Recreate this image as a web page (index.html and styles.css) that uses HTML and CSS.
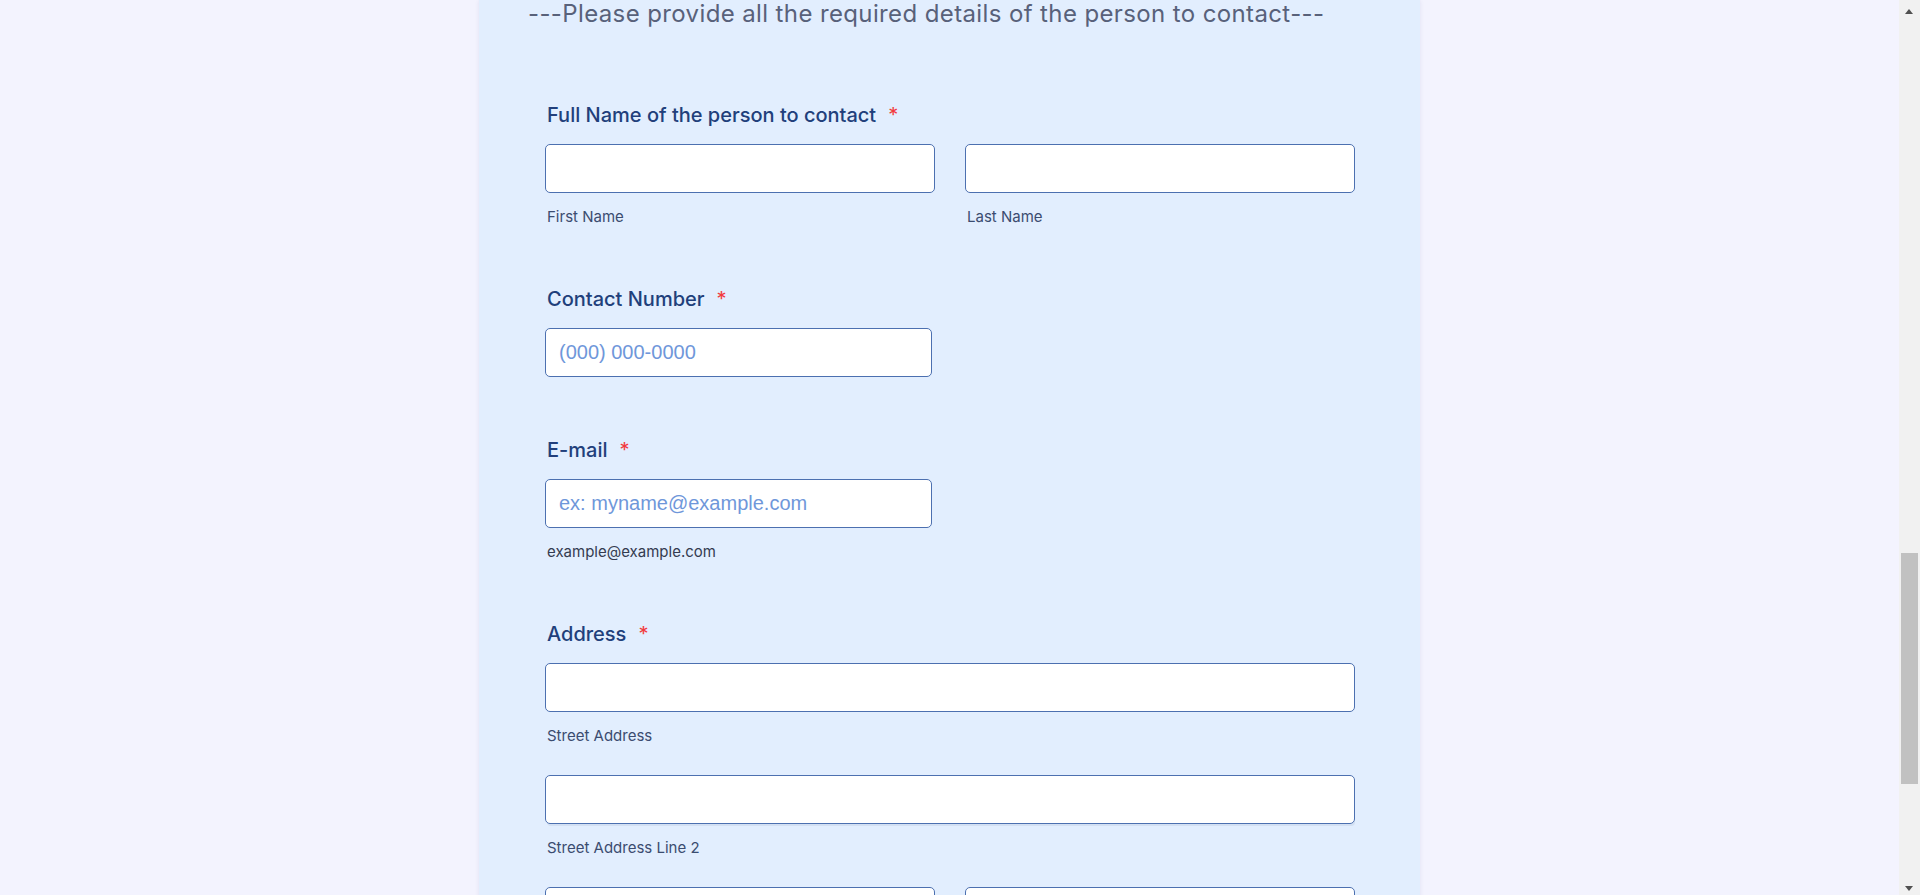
FILE: index.html
```html
<!DOCTYPE html>
<html lang="en">
<head>
<meta charset="utf-8">
<title>Contact details</title>
<link rel="stylesheet" href="styles.css">
</head>
<body>
<div class="page">
  <form class="panel">
    <h2 class="subheader">---Please provide all the required details of the person to contact---</h2>

    <div class="field">
      <label class="label">Full Name of the person to contact<span class="req">*</span></label>
      <div class="row">
        <div class="col">
          <input class="input" type="text">
          <span class="sublabel">First Name</span>
        </div>
        <div class="col">
          <input class="input" type="text">
          <span class="sublabel">Last Name</span>
        </div>
      </div>
    </div>

    <div class="field">
      <label class="label">Contact Number<span class="req">*</span></label>
      <input class="input input-short" type="tel" placeholder="(000) 000-0000">
    </div>

    <div class="field">
      <label class="label">E-mail<span class="req">*</span></label>
      <input class="input input-short" type="email" placeholder="ex: myname@example.com">
      <span class="sublabel sublabel-dark">example@example.com</span>
    </div>

    <div class="field">
      <label class="label">Address<span class="req">*</span></label>
      <div class="stack">
        <div class="col">
          <input class="input" type="text">
          <span class="sublabel">Street Address</span>
        </div>
        <div class="col">
          <input class="input input-shadow" type="text">
          <span class="sublabel">Street Address Line 2</span>
        </div>
        <div class="row">
          <div class="col">
            <input class="input" type="text">
          </div>
          <div class="col">
            <input class="input" type="text">
          </div>
        </div>
      </div>
    </div>
  </form>
</div>
<div class="scrollbar" aria-hidden="true">
  <span class="sb-arrow sb-up"></span>
  <span class="sb-thumb"></span>
  <span class="sb-arrow sb-down"></span>
</div>
</body>
</html>
```

FILE: styles.css
```css
html, body {
  margin: 0;
  padding: 0;
  height: 100%;
  overflow: hidden;
}

body {
  background: #f3f3fe;
  font-family: Inter, "Noto Sans", sans-serif;
}

.page {
  margin-right: 21px;
}

.panel {
  box-sizing: border-box;
  width: 941px;
  min-height: 1000px;
  margin: 0 auto;
  padding: 0 65px 0 66px;
  background: #e2eefe;
  box-shadow: 0 0 4px rgba(70, 70, 140, 0.10);
  display: flex;
  flex-direction: column;
}

.subheader {
  margin: 0 0 74px -17px;
  font-size: 24px;
  line-height: 28px;
  font-weight: 400;
  letter-spacing: 0.38px;
  color: #58617a;
  white-space: nowrap;
}

.field {
  display: flex;
  flex-direction: column;
  align-items: flex-start;
  margin-bottom: 60px;
}

.label {
  display: block;
  padding: 1px 0 0 2px;
  font-size: 20px;
  line-height: 24px;
  font-weight: 500;
  color: #213f7b;
  margin-bottom: 17px;
}

.req {
  color: #f23a3c;
  margin-left: 12px;
  font-weight: 400;
}

.row {
  display: flex;
  gap: 30px;
  width: 100%;
}

.row .col {
  flex: 1 1 0;
}

.stack {
  display: flex;
  flex-direction: column;
  gap: 30px;
  width: 100%;
}

.col {
  display: flex;
  flex-direction: column;
  align-items: flex-start;
  width: 100%;
}

.input {
  box-sizing: border-box;
  width: 100%;
  height: 49px;
  margin: 0;
  padding: 0 13px;
  border: 1px solid #4c70b0;
  border-radius: 5px;
  background: #ffffff;
  font-family: "Liberation Sans", Arial, sans-serif;
  font-size: 20px;
  color: #2c3345;
  outline: none;
}

.input::placeholder {
  color: #6f97da;
  opacity: 1;
}

.input-short {
  width: 387px;
}

.input-shadow {
  box-shadow: 1px 3px 0 -1px #d3e0f3;
}

.sublabel {
  display: block;
  margin-top: 15px;
  padding-left: 2px;
  font-size: 15px;
  line-height: 18px;
  color: #3b4c70;
}

.sublabel-dark {
  color: #343b50;
}

.scrollbar {
  position: fixed;
  top: 0;
  right: 0;
  width: 21px;
  height: 100%;
  background: #f1f1f1;
}

.sb-thumb {
  position: absolute;
  left: 2px;
  right: 2px;
  top: 553px;
  height: 231px;
  background: #c1c1c1;
}

.sb-arrow {
  position: absolute;
  left: 6px;
  width: 0;
  height: 0;
  border-left: 4.5px solid transparent;
  border-right: 4.5px solid transparent;
}

.sb-up {
  top: 9px;
  border-bottom: 5px solid #505050;
}

.sb-down {
  bottom: 4px;
  border-top: 5px solid #505050;
}
```
